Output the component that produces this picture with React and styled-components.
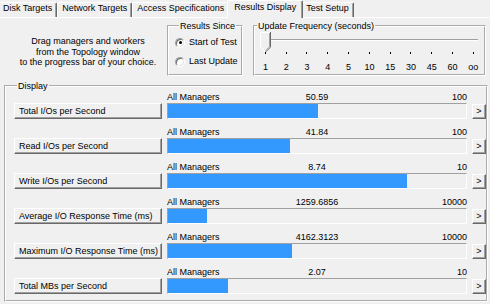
import styled, { createGlobalStyle } from "styled-components";

const GlobalStyle = createGlobalStyle`
  *, *::before, *::after { box-sizing: border-box; }
  html, body { margin: 0; padding: 0; background: #f0f0f0; }
`;

const tabs = ["Disk Targets", "Network Targets", "Access Specifications", "Results Display", "Test Setup"];
const scale = ["1", "2", "3", "4", "5", "10", "15", "30", "45", "60", "oo"];

const results = [
  { name: "Total I/Os per Second", value: "50.59", max: "100", pct: 50.3 },
  { name: "Read I/Os per Second", value: "41.84", max: "100", pct: 41 },
  { name: "Write I/Os per Second", value: "8.74", max: "10", pct: 80.2 },
  { name: "Average I/O Response Time (ms)", value: "1259.6856", max: "10000", pct: 13.1 },
  { name: "Maximum I/O Response Time (ms)", value: "4162.3123", max: "10000", pct: 41.6 },
  { name: "Total MBs per Second", value: "2.07", max: "10", pct: 20.1 },
];

function Thumb() {
  return (
    <ThumbSvg width="11" height="20" viewBox="0 0 11 20">
      <path d="M0.5 15 V0.5 H10.5 V15 L5.5 19.5 Z" fill="#f0f0f0" />
      <path d="M0.5 15.5 V0.5 H10" stroke="#fff" fill="none" />
      <path d="M0.5 15 L5 19.5" stroke="#fff" fill="none" />
      <path d="M10.5 0 V15.2 L5.5 20" stroke="#696969" fill="none" />
      <path d="M9.5 1 V14.8 L5.5 18.8" stroke="#a0a0a0" fill="none" />
    </ThumbSvg>
  );
}

export default function App() {
  return (
    <Window>
      <GlobalStyle />
      <TabBar>
        {tabs.map((t) => (
          <Tab key={t} $active={t === "Results Display"}>{t}</Tab>
        ))}
      </TabBar>

      <TopSection>
        <Instructions>
          Drag managers and workers
          <br />
          from the Topology window
          <br />
          to the progress bar of your choice.
        </Instructions>

        <SinceBox>
          <Legend $ml={4}>Results Since</Legend>
          <RadioRow $mt={5}>
            <Radio $checked />
            Start of Test
          </RadioRow>
          <RadioRow $mt={6}>
            <Radio />
            Last Update
          </RadioRow>
        </SinceBox>

        <FrequencyBox>
          <Legend $ml={2}>Update Frequency (seconds)</Legend>
          <Slider>
            <Track />
            <Thumb />
          </Slider>
          <Scale>
            {scale.map((s) => (
              <ScaleStep key={s}>
                <Tick />
                <ScaleLabel>{s}</ScaleLabel>
              </ScaleStep>
            ))}
          </Scale>
        </FrequencyBox>
      </TopSection>

      <DisplayBox>
        <Legend $ml={3}>Display</Legend>
        <Rows>
          {results.map((r) => (
            <ResultRow key={r.name}>
              <BarCaption>
                <span>All Managers</span>
                <Centered>{r.value}</Centered>
                <RightAligned>{r.max}</RightAligned>
              </BarCaption>
              <NameButton>{r.name}</NameButton>
              <Bar>
                <Fill style={{ width: `${r.pct}%` }} />
              </Bar>
              <MoreButton>&gt;</MoreButton>
            </ResultRow>
          ))}
        </Rows>
      </DisplayBox>
    </Window>
  );
}

const Window = styled.div`
  width: 490px;
  height: 304px;
  overflow: hidden;
  background: #f0f0f0;
  color: #000;
  font-family: "Liberation Sans", Arial, sans-serif;
  font-size: 9px;
`;

const TabBar = styled.div`
  display: flex;
  align-items: flex-end;
  height: 18px;
  margin-left: -2px;
  border-bottom: 1px solid #fff;
`;

const Tab = styled.div`
  position: relative;
  height: ${(p) => (p.$active ? "18px" : "15px")};
  margin: ${(p) => (p.$active ? "0 -2px -1px" : "0")};
  padding: ${(p) => (p.$active ? "1px 6px 0" : "0 4px")};
  line-height: 11px;
  white-space: nowrap;
  background: #f0f0f0;
  border: 1px solid;
  border-color: #fff #696969 transparent #fff;
  border-bottom: none;
  border-radius: 2px 2px 0 0;
  box-shadow: inset -1px 0 0 #a0a0a0;
  z-index: ${(p) => (p.$active ? 1 : 0)};
`;

const TopSection = styled.div`
  display: flex;
  align-items: flex-start;
  margin-top: 3px;
`;

const Instructions = styled.div`
  width: 167px;
  padding: 15px 0 0 9px;
  line-height: 10.5px;
  text-align: center;
`;

const GroupBox = styled.fieldset`
  margin: 0;
  padding: 0;
  min-width: 0;
  border: 2px groove #fff;
`;

const Legend = styled.legend`
  margin-left: ${(p) => p.$ml}px;
  padding: 0 1px;
  line-height: 10px;
  font-size: 9px;
`;

const SinceBox = styled(GroupBox)`
  width: 76px;
  height: 55px;
  padding-left: 6px;
`;

const RadioRow = styled.div`
  display: flex;
  align-items: center;
  gap: 4px;
  height: 13px;
  margin-top: ${(p) => p.$mt}px;
  line-height: 13px;
`;

const Radio = styled.span`
  position: relative;
  width: 10px;
  height: 10px;
  border-radius: 50%;
  background: #fff;
  border: 1px solid;
  border-color: #a0a0a0 #fff #fff #a0a0a0;
  box-shadow: inset 1px 1px 0 #696969, inset -1px -1px 0 #e3e3e3;

  &::after {
    content: "";
    display: ${(p) => (p.$checked ? "block" : "none")};
    position: absolute;
    left: 2.5px;
    top: 2.5px;
    width: 3px;
    height: 3px;
    border-radius: 50%;
    background: #000;
  }
`;

const FrequencyBox = styled(GroupBox)`
  width: 233px;
  height: 55px;
  margin-left: 10px;
`;

const Slider = styled.div`
  position: relative;
  height: 21px;
  padding: 8px 6px 0 7px;
`;

const Track = styled.div`
  height: 2px;
  border-top: 1px solid #a0a0a0;
  border-bottom: 1px solid #fff;
`;

const ThumbSvg = styled.svg`
  position: absolute;
  left: 5px;
  top: 1px;
  display: block;
`;

const Scale = styled.div`
  display: grid;
  grid-template-columns: repeat(11, 20.8px);
`;

const ScaleStep = styled.div`
  display: flex;
  flex-direction: column;
  align-items: center;
`;

const Tick = styled.div`
  width: 1px;
  height: 2px;
  background: #000;
`;

const ScaleLabel = styled.div`
  margin-top: 8px;
  line-height: 10px;
  white-space: nowrap;
`;

const DisplayBox = styled(GroupBox)`
  width: 484px;
  margin: 5px 0 0 4px;
  padding: 0 0 6px 8px;
`;

const Rows = styled.div`
  display: flex;
  flex-direction: column;
  gap: 8px;
  padding-top: 1px;
`;

const ResultRow = styled.div`
  display: grid;
  grid-template-columns: 148px 300px 14px;
  grid-template-rows: 11px 16px;
  column-gap: 5px;
`;

const BarCaption = styled.div`
  grid-column: 2;
  grid-row: 1;
  display: flex;
  line-height: 11px;
  white-space: nowrap;

  & > span {
    flex: 1 1 0;
  }
`;

const Centered = styled.span`
  text-align: center;
`;

const RightAligned = styled.span`
  text-align: right;
`;

const raised = `
  background: #f0f0f0;
  border: 1px solid;
  border-color: #fff #696969 #696969 #fff;
  box-shadow: inset -1px -1px 0 #a0a0a0;
`;

const NameButton = styled.div`
  grid-column: 1;
  grid-row: 2;
  ${raised}
  padding-left: 4px;
  line-height: 14px;
  white-space: nowrap;
`;

const Bar = styled.div`
  grid-column: 2;
  grid-row: 2;
  border: 1px solid;
  border-color: #a0a0a0 #fff #fff #a0a0a0;
  background: #f0f0f0;
`;

const Fill = styled.div`
  height: 100%;
  background: #3399ff;
`;

const MoreButton = styled.div`
  grid-column: 3;
  grid-row: 2;
  align-self: end;
  height: 15px;
  ${raised}
  line-height: 13px;
  text-align: center;
`;
